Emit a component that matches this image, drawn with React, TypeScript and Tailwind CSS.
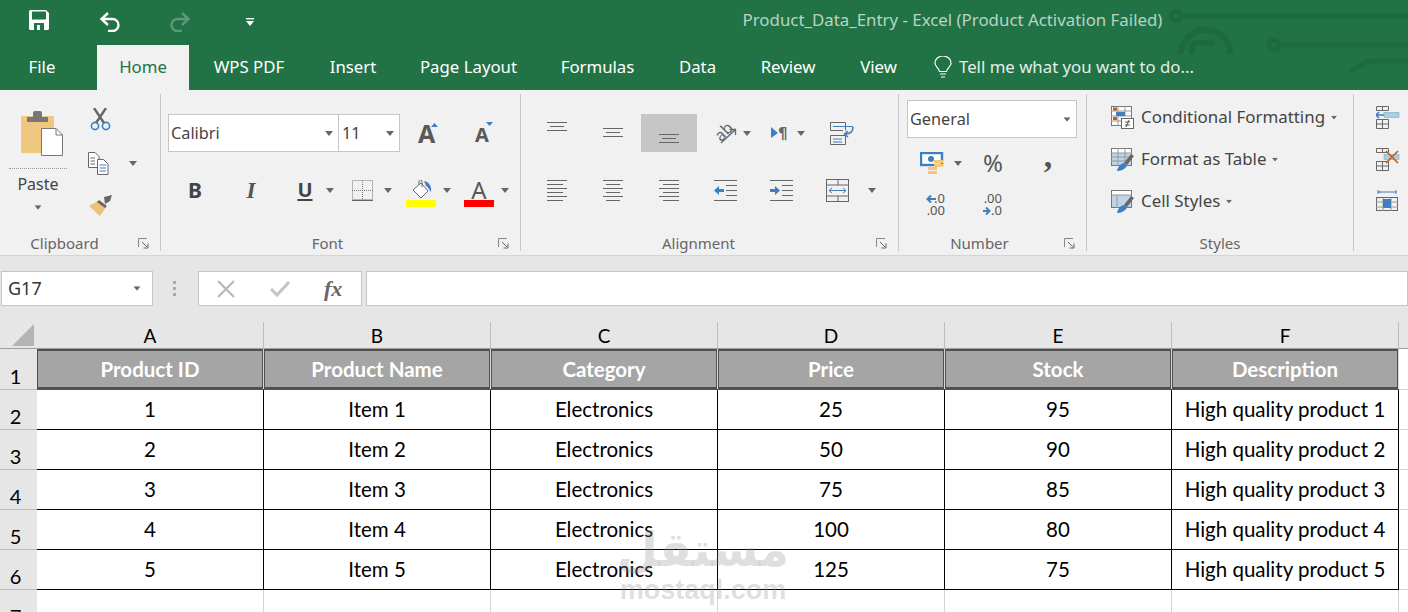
import React from "react";

const Caret = ({ className = "" }: { className?: string }) => (
  <svg width="8" height="5" viewBox="0 0 8 5" className={"shrink-0 " + className}>
    <polygon points="0,0 8,0 4,5" fill="#666" />
  </svg>
);

const Launcher = () => (
  <svg width="11" height="11" viewBox="0 0 11 11" className="absolute right-[11px] top-[4px]">
    <path d="M0.5 9V0.5H9" fill="none" stroke="#888" />
    <path d="M4 4L9 9M10 5.5V10H5.5" fill="none" stroke="#666" />
  </svg>
);

const Group = ({ w, label, labelCls, children, launcher = true }: { w: string; label: string; labelCls: string; children: React.ReactNode; launcher?: boolean }) => (
  <div className={"shrink-0 h-[157px] mt-[4px] border-r border-[#c6c6c6] flex flex-col " + w}>
    <div className="flex-1 min-h-0">{children}</div>
    <div className={"relative h-[17px] pt-[1px] text-center text-[15px] leading-[17px] text-[#666] " + labelCls}>
      {label}
      {launcher && <Launcher />}
    </div>
  </div>
);

const Lines = ({ rows }: { rows: [number, number, number][] }) => (
  <svg width="22" height="24" viewBox="0 0 22 24">
    {rows.map(([y, a, b], i) => (
      <rect key={i} x={a} y={y} width={b - a} height="1" fill="#666" />
    ))}
  </svg>
);

const AlignCell = ({ y }: { y: number }) => (
  <Lines rows={[[y, 1, 21], [y + 4, 4, 18], [y + 8, 1, 21]]} />
);

const Tab = ({ cls, children }: { cls: string; children: React.ReactNode }) => (
  <div className={"h-[45px] pb-[1px] flex items-center justify-center text-[16.8px] text-white shrink-0 " + cls}>{children}</div>
);

const Circuit = () => (
  <svg className="absolute left-[1160px] top-0" width="248" height="72" viewBox="0 0 248 72" fill="none" stroke="#1c6a3e" strokeWidth="5">
    <circle cx="16" cy="16" r="5" />
    <path d="M21 16H248" />
    <circle cx="114" cy="45" r="5" />
    <path d="M119 45H248" />
    <path d="M21 54A24 24 0 0 1 70 54" strokeWidth="6" />
    <path d="M32 43H55M32 43V54" strokeWidth="6" />
    <path d="M190 72L208 61H248" strokeWidth="5" />
  </svg>
);

const Save = () => (
  <svg width="20" height="20" viewBox="0 0 20 20">
    <path d="M0 1.5A1.5 1.5 0 0 1 1.5 0H17L20 3V18.5A1.5 1.5 0 0 1 18.5 20H1.5A1.5 1.5 0 0 1 0 18.5Z" fill="#fff" />
    <rect x="3" y="1.5" width="14" height="8" fill="#217346" />
    <rect x="5" y="13" width="10" height="7" fill="#217346" />
    <rect x="8" y="15" width="3" height="5" fill="#fff" />
  </svg>
);
const Undo = ({ color }: { color: string }) => (
  <svg width="22" height="20" viewBox="0 0 22 20" fill="none" stroke={color} strokeWidth="2.4">
    <path d="M9 1L2.5 7L9 13M2.5 7H13.5A6 6 0 0 1 13.5 19H9" />
  </svg>
);

const Clip = () => (
  <svg width="42" height="47" viewBox="0 0 42 47">
    <rect x="0" y="6" width="33" height="37" rx="1" fill="#efc77e" />
    <path d="M6 12V7H12V3A2 2 0 0 1 14 1H19A2 2 0 0 1 21 3V7H27V12Z" fill="#777" />
    <path d="M20.5 18.5H35L41.5 25V45.5H20.5Z" fill="#fff" stroke="#777" />
    <path d="M35 18.5V25H41.5" fill="none" stroke="#777" />
  </svg>
);
const Scissors = () => (
  <svg width="22" height="23" viewBox="0 0 22 23" fill="none">
    <path d="M4 0L14 15M16 0L6 15" stroke="#666" strokeWidth="2.4" />
    <circle cx="5" cy="18" r="3.6" stroke="#3f7fbf" strokeWidth="1.6" />
    <circle cx="16" cy="18" r="3.6" stroke="#3f7fbf" strokeWidth="1.6" />
  </svg>
);
const Copy = () => (
  <svg width="21" height="23" viewBox="0 0 21 23" fill="none">
    <path d="M.5.5H7L11 4.5V15.5H.5Z" fill="#fff" stroke="#666" />
    <path d="M9.5 7.5H15.5L20 12V22.5H9.5Z" fill="#fff" stroke="#666" />
    <path d="M2.5 6H7M2.5 9H7M2.5 12H7" stroke="#666" />
    <path d="M11.5 13H18M11.5 16H18M11.5 19H18" stroke="#3f7fbf" />
  </svg>
);
const Painter = () => (
  <svg width="24" height="22" viewBox="0 0 24 22">
    <path d="M15 2L23 0L21 6L16 9Z" fill="#666" />
    <path d="M9 6L17 12L11 21L0 11Z" fill="#e9c27b" />
    <path d="M10 5L18 11L16 13L8 7Z" fill="#666" />
  </svg>
);
const BigA = ({ size, tri, base }: { size: number; tri: string; base: number }) => (
  <svg width="26" height="24" viewBox="0 0 26 24" className="overflow-visible">
    <text x="0" y={base} fontSize={size} fontWeight="700" fill="#595959" fontFamily="Noto Sans">A</text>
    <polygon points={tri} fill="#3f7fbf" />
  </svg>
);
const Borders = () => (
  <svg width="21" height="21" viewBox="0 0 21 21" fill="none">
    <rect x=".5" y=".5" width="20" height="19" stroke="#777" strokeDasharray="1 1" />
    <path d="M10.5 0V20M0 10.5H21" stroke="#777" strokeDasharray="1 1" />
    <path d="M0 20.5H21" stroke="#666" />
  </svg>
);
const Fill = () => (
  <svg width="30" height="27" viewBox="0 0 30 27">
    <path d="M7 10L15 3L22 11L15 18Z" fill="#fff" stroke="#666" />
    <path d="M13 5V1.5A1.5 1.5 0 0 1 16 1.5V7" fill="none" stroke="#666" />
    <path d="M18 1C23 2 26 6 25 12C23 9 22 7 20 6Z" fill="#3f7fbf" />
    <rect x="0" y="20" width="30" height="7" fill="#ffff00" />
  </svg>
);
const FontColor = () => (
  <svg width="30" height="27" viewBox="0 0 30 27" className="overflow-visible">
    <text x="15" y="19" textAnchor="middle" fontSize="24" fill="#595959" fontFamily="Noto Sans">A</text>
    <rect x="0" y="20" width="30" height="7" fill="#ff0000" />
  </svg>
);
const Orient = () => (
  <svg width="22" height="20" viewBox="0 0 22 20" fill="none" className="shrink-0 overflow-visible">
    <text x="0" y="15" fontSize="16" fill="#666" fontFamily="Noto Sans" transform="rotate(-45 8 10)">ab</text>
    <path d="M6 20L20 7M14.5 6.5H20.5V12" stroke="#666" strokeWidth="1.3" />
  </svg>
);
const Para = () => (
  <svg width="20" height="16" viewBox="0 0 20 16" className="shrink-0 overflow-visible">
    <polygon points="0,2 7,8 0,13" fill="#3f7fbf" />
    <text x="7" y="14" fontSize="15" fontWeight="700" fill="#666" fontFamily="DejaVu Sans">¶</text>
  </svg>
);
const Wrap = () => (
  <svg width="24" height="23" viewBox="0 0 24 23" fill="none" className="shrink-0">
    <path d="M.5.5H15.5V8.5M.5 8.5H13M.5.5V8.5" stroke="#666" />
    <path d="M.5 13.5H15.5V22.5H.5Z" stroke="#666" />
    <path d="M3 4.5H23M3 17H12M3 20H12" stroke="#3f7fbf" />
    <path d="M23 5C23 10 20 12 15 12M18 9L14.5 12L18 15" stroke="#3f7fbf" strokeWidth="1.6" />
  </svg>
);
const Indent = ({ right }: { right: boolean }) => (
  <svg width="23" height="21" viewBox="0 0 23 21" className="shrink-0">
    {[0, 5, 10, 15, 20].map((y, i) => (
      <rect key={y} x={i === 0 || i === 4 ? 0 : 12} y={y} width={i === 0 || i === 4 ? 23 : 11} height="1" fill="#666" />
    ))}
    <path d={right ? "M0 9H5V6L10 10.5L5 15V12H0Z" : "M10 9H5V6L0 10.5L5 15V12H10Z"} fill="#3f7fbf" />
  </svg>
);
const Merge = () => (
  <svg width="24" height="23" viewBox="0 0 24 23" fill="none" className="shrink-0">
    <rect x=".5" y=".5" width="22" height="22" stroke="#666" />
    <path d="M0 6H23M0 17H23M12 0V6M12 17V23" stroke="#666" />
    <path d="M3 11.5H20M6 9L3 11.5L6 14M17 9L20 11.5L17 14" stroke="#3f7fbf" />
  </svg>
);
const Money = () => (
  <svg width="24" height="23" viewBox="0 0 24 23">
    <rect x="1" y="1" width="21" height="12" fill="#fff" stroke="#3f7fbf" strokeWidth="2.4" />
    <circle cx="11" cy="7" r="3" fill="#3f7fbf" />
    <rect x="14" y="8" width="9" height="3" fill="#efc77e" />
    <rect x="14" y="12" width="9" height="3" fill="#efc77e" />
    <rect x="8" y="15" width="9" height="3" fill="#efc77e" />
    <rect x="8" y="19" width="9" height="3" fill="#efc77e" />
  </svg>
);
const Dec = ({ inc }: { inc: boolean }) => (
  <svg width="26" height="26" viewBox="0 0 26 26" className="overflow-visible">
    {inc ? (
      <>
        <text x="25" y="11" textAnchor="end" fontSize="13" fill="#555" fontFamily="Noto Sans">.00</text>
        <text x="25" y="23" textAnchor="end" fontSize="13" fill="#555" fontFamily="Noto Sans">.0</text>
        <path d="M6 19H12M9 15.5L12.5 19L9 22.5" fill="none" stroke="#3f7fbf" strokeWidth="2" />
      </>
    ) : (
      <>
        <text x="24" y="11" textAnchor="end" fontSize="13" fill="#555" fontFamily="Noto Sans">.0</text>
        <text x="24" y="23" textAnchor="end" fontSize="13" fill="#555" fontFamily="Noto Sans">.00</text>
        <path d="M15 7H7M10 3.5L6.5 7L10 10.5" fill="none" stroke="#3f7fbf" strokeWidth="2" />
      </>
    )}
  </svg>
);
const CondFmt = () => (
  <svg width="23" height="23" viewBox="0 0 23 23" fill="none">
    <rect x=".5" y=".5" width="20" height="19" fill="#fff" stroke="#777" />
    <path d="M7 0V20M14 0V10M0 5H21M0 10H21M0 15H11" stroke="#999" />
    <rect x="5" y="6" width="9" height="4" fill="#3f7fbf" />
    <rect x="2" y="1.5" width="4" height="3" fill="#c55a11" />
    <rect x="2" y="11" width="4" height="3" fill="#c55a11" />
    <rect x="10.5" y="12.5" width="12" height="10" fill="#fff" stroke="#666" />
    <path d="M14 16H19M14 19H19M18 14L15 21" stroke="#444" strokeWidth=".9" />
  </svg>
);
const TableFmt = ({ cell }: { cell?: boolean }) => (
  <svg width="23" height="23" viewBox="0 0 23 23" fill="none">
    <rect x=".5" y=".5" width="20" height="17" fill="#fff" stroke="#777" />
    <rect x="1" y="5" width="19" height="12" fill="#bcd3e8" />
    {!cell && <path d="M7 0V18M14 0V18M0 5H21M0 9H21M0 13H21" stroke="#999" />}
    {cell && <path d="M0 5H21M6 5V18" stroke="#999" />}
    <path d="M13 15L20 6L23 8L16 17Z" fill="#666" />
    <path d="M6 23C7 18 10 15 14 15L16 18C14 21 10 23 6 23Z" fill="#3f7fbf" />
  </svg>
);
const CellOp = ({ kind }: { kind: 0 | 1 | 2 }) => (
  <svg width="24" height="23" viewBox="0 0 24 23" fill="none">
    {kind < 2 ? (
      <>
        <path d="M.5.5H12.5V4.5H.5ZM6.5.5V4.5M.5 13.5H12.5V22.5H.5ZM6.5 13.5V22.5M.5 18H12.5" stroke="#666" />
        <rect x="8" y="6.5" width="15" height="5" fill="#a9cde6" stroke="#7aa" strokeWidth=".5" />
        {kind === 0 ? (
          <path d="M0 9H8M3 6L0 9L3 12" stroke="#3f7fbf" strokeWidth="1.6" />
        ) : (
          <path d="M10 3L22 15M22 3L10 15" stroke="#c55a11" strokeWidth="1.6" />
        )}
      </>
    ) : (
      <>
        <path d="M2 2H20M2 0V4M20 0V4M5 2L3 2" stroke="#3f7fbf" />
        <rect x=".5" y="7.5" width="21" height="13" stroke="#666" />
        <path d="M7 8V21M15 8V21M0 12H22M0 17H22" stroke="#999" />
        <rect x="7" y="9" width="8" height="9" fill="#3f7fbf" />
      </>
    )}
  </svg>
);

const StyleRow = ({ icon, text }: { icon: React.ReactNode; text: string }) => (
  <div className="h-[42px] flex items-center">
    <span className="w-[30px] shrink-0">{icon}</span>
    <span className="text-[16.9px] text-[#444] whitespace-nowrap">{text}</span>
    <Caret className="ml-[5px] scale-75" />
  </div>
);

const cols = ["A", "B", "C", "D", "E", "F"];
const heads = ["Product ID", "Product Name", "Category", "Price", "Stock", "Description"];
const rows = [
  ["1", "Item 1", "Electronics", "25", "95", "High quality product 1"],
  ["2", "Item 2", "Electronics", "50", "90", "High quality product 2"],
  ["3", "Item 3", "Electronics", "75", "85", "High quality product 3"],
  ["4", "Item 4", "Electronics", "100", "80", "High quality product 4"],
  ["5", "Item 5", "Electronics", "125", "75", "High quality product 5"],
];

const RowHead = ({ n, tall }: { n: number; tall?: boolean }) => (
  <div className={"bg-[#e6e6e6] border-b border-[#bdbdbd] flex items-end justify-center pr-[6px] text-[20px] leading-[26px] text-black " + (tall ? "h-[41px]" : "h-[40px]")}>
    {n}
  </div>
);

export default function App() {
  return (
    <div className="relative w-[1408px] h-[612px] overflow-hidden bg-white font-['Noto_Sans',sans-serif]">
      {/* Green title & tabs */}
      <div className="relative h-[90px] bg-[#217346] overflow-hidden">
        <Circuit />
        <div className="relative h-[45px] flex items-center">
          <span className="ml-[29px] w-[20px] -mt-[5px]"><Save /></span>
          <span className="ml-[50px] w-[22px] -mt-[2px]"><Undo color="#fff" /></span>
          <span className="ml-[48px] w-[22px] -mt-[2px] -scale-x-100"><Undo color="#5c9a77" /></span>
          <span className="ml-[54px] w-[10px] -mt-[2px]">
            <svg width="10" height="10" viewBox="0 0 10 10"><rect x="1" y="1" width="8" height="1.4" fill="#fff" /><polygon points="1,4 9,4 5,9" fill="#fff" /></svg>
          </span>
          <span className="ml-[485px] w-[425px] text-[16.85px] text-center text-[#b9d3c3] whitespace-nowrap -mt-[5px]">Product_Data_Entry - Excel (Product Activation Failed)</span>
        </div>
        <div className="relative flex h-[45px]">
          <Tab cls="w-[84px]">File</Tab>
          <Tab cls="ml-[13px] w-[92px] bg-[#f1f1f1] !text-[#217346]">Home</Tab>
          <Tab cls="w-[120px]">WPS PDF</Tab>
          <Tab cls="w-[88px]">Insert</Tab>
          <Tab cls="w-[143px]">Page Layout</Tab>
          <Tab cls="w-[115px]">Formulas</Tab>
          <Tab cls="w-[85px]">Data</Tab>
          <Tab cls="w-[96px]">Review</Tab>
          <Tab cls="w-[85px]">View</Tab>
          <div className="ml-[13px] h-[45px] flex items-center">
            <svg width="18" height="23" viewBox="0 0 18 23" fill="none" stroke="#fff" strokeWidth="1.2">
              <path d="M5.5 15.5C5 12 1 11 1 7A8 7 0 0 1 17 7C17 11 13 12 12.5 15.5Z" />
              <path d="M6 18H12M7 21H11" />
            </svg>
          </div>
          <Tab cls="ml-[7px] !text-[#e3efe8]">Tell me what you want to do...</Tab>
        </div>
      </div>

      {/* Ribbon */}
      <div className="h-[166px] bg-[#f1f1f1] border-b border-[#d4d4d4] flex overflow-hidden text-[#444]">
        <Group w="w-[161px]" labelCls="pr-[31px]" label="Clipboard">
          <div className="flex">
            <div className="ml-[9px] w-[58px] flex flex-col items-center">
              <div className="mt-[16px] ml-[7px] h-[47px]"><Clip /></div>
              <div className="mt-[11px] w-full border-t border-dotted border-[#999]" />
              <div className="mt-[5px] text-[16px] leading-[20px]">Paste</div>
              <Caret className="mt-[11px] scale-90" />
            </div>
            <div className="ml-[21px] flex flex-col">
              <div className="mt-[14px] ml-[2px] h-[23px]"><Scissors /></div>
              <div className="mt-[21px] flex items-center h-[23px]">
                <Copy />
                <Caret className="ml-[20px]" />
              </div>
              <div className="mt-[20px] ml-[1px]"><Painter /></div>
            </div>
          </div>
        </Group>

        <Group w="w-[360px]" labelCls="pr-[26px]" label="Font">
          <div className="pt-[20px]">
            <div className="flex h-[38px] items-center ml-[7px]">
              <div className="w-[171px] h-[38px] bg-white border border-[#c6c6c6] flex items-center justify-between pl-[2px] pr-[5px] text-[16.3px]">
                Calibri <Caret />
              </div>
              <div className="w-[61px] h-[38px] bg-white border border-[#c6c6c6] border-l-0 flex items-center justify-between pl-[3px] pr-[5px] text-[16.3px]">
                11 <Caret />
              </div>
              <div className="ml-[18px] w-[26px]"><BigA size={25} base={22} tri="13,6 20,6 16.5,2" /></div>
              <div className="ml-[31px] w-[26px]"><BigA size={20} base={21} tri="11,1 18,1 14.5,5" /></div>
            </div>
            <div className="flex items-center h-[36px] mt-[20px]">
              <span className="ml-[24px] w-[20px] text-center text-[21px] font-bold text-[#444] leading-none">B</span>
              <span className="ml-[36px] w-[20px] text-center text-[23px] font-bold italic text-[#555] leading-none font-['Liberation_Serif',serif]">I</span>
              <span className="ml-[34px] w-[20px] text-center text-[20px] font-bold text-[#444] leading-none underline underline-offset-2">U</span>
              <Caret className="ml-[11px]" />
              <span className="ml-[18px]"><Borders /></span>
              <Caret className="ml-[11px]" />
              <span className="ml-[14px] mt-[6px]"><Fill /></span>
              <Caret className="ml-[7px]" />
              <span className="ml-[13px] mt-[6px]"><FontColor /></span>
              <Caret className="ml-[7px]" />
            </div>
          </div>
        </Group>

        <Group w="w-[378px]" labelCls="pr-[22px]" label="Alignment">
          <div className="ml-[8px] pt-[20px] grid grid-cols-[repeat(6,56px)] grid-rows-[38px_38px] gap-y-[19px]">
            <div className="flex justify-center pt-[8px] h-[38px]"><AlignCell y={0} /></div>
            <div className="flex justify-center pt-[14px] h-[38px]"><AlignCell y={0} /></div>
            <div className="flex justify-center pt-[20px] h-[38px] bg-[#c6c6c6]"><AlignCell y={0} /></div>
            <div className="flex items-center pl-[18px]"><Orient /><Caret className="ml-[6px]" /></div>
            <div className="flex items-center pl-[18px]"><Para /><Caret className="ml-[6px]" /></div>
            <div className="flex items-center pl-[21px]"><Wrap /></div>
            <div className="flex justify-center pt-[9px]"><Lines rows={[[0, 1, 21], [4, 1, 17], [8, 1, 21], [12, 1, 17], [16, 1, 21], [20, 1, 17]]} /></div>
            <div className="flex justify-center pt-[9px]"><Lines rows={[[0, 1, 21], [4, 4, 18], [8, 1, 21], [12, 4, 18], [16, 1, 21], [20, 4, 18]]} /></div>
            <div className="flex justify-center pt-[9px]"><Lines rows={[[0, 1, 21], [4, 5, 21], [8, 1, 21], [12, 5, 21], [16, 1, 21], [20, 5, 21]]} /></div>
            <div className="flex justify-center pt-[9px]"><Indent right={false} /></div>
            <div className="flex justify-center pt-[9px]"><Indent right /></div>
            <div className="flex items-start pl-[17px] pt-[8px]"><Merge /><Caret className="ml-[18px] mt-[9px]" /></div>
          </div>
        </Group>

        <Group w="w-[188px]" labelCls="pr-[26px]" label="Number">
          <div className="ml-[8px] pt-[6px]">
            <div className="w-[170px] h-[38px] bg-white border border-[#c6c6c6] flex items-center justify-between pl-[2px] pr-[5px] text-[16.3px]">
              General <Caret className="scale-90" />
            </div>
            <div className="flex items-center h-[38px] mt-[6px]">
              <span className="ml-[13px]"><Money /></span>
              <Caret className="ml-[10px]" />
              <span className="ml-[16px] w-[30px] text-center text-[24px] leading-none text-[#555]">%</span>
              <span className="ml-[25px] w-[30px] text-center text-[34px] font-bold leading-none text-[#555] font-['Liberation_Serif',serif] -mt-[14px]">,</span>
            </div>
            <div className="flex items-center h-[30px] mt-[8px]">
              <span className="ml-[14px]"><Dec inc={false} /></span>
              <span className="ml-[30px]"><Dec inc /></span>
            </div>
          </div>
        </Group>

        <Group w="w-[267px]" labelCls="" label="Styles" launcher={false}>
          <div className="ml-[24px] pt-[2px]">
            <StyleRow icon={<CondFmt />} text="Conditional Formatting" />
            <StyleRow icon={<TableFmt />} text="Format as Table" />
            <StyleRow icon={<TableFmt cell />} text="Cell Styles" />
          </div>
        </Group>

        <div className="ml-[22px] pt-[6px] flex flex-col">
          <div className="h-[42px] flex items-center"><CellOp kind={0} /></div>
          <div className="h-[42px] flex items-center"><CellOp kind={1} /></div>
          <div className="h-[42px] flex items-center"><CellOp kind={2} /></div>
        </div>
      </div>

      {/* Formula bar */}
      <div className="h-[66px] bg-[#e6e6e6] flex items-start pt-[15px]">
        <div className="ml-[1px] w-[152px] h-[35px] bg-white border border-[#c6c6c6] flex items-center justify-between pl-[6px] pr-[11px] text-[18px] text-[#333]">
          G17 <Caret className="scale-90" />
        </div>
        <div className="ml-[19px] w-[4px] h-[35px] flex flex-col items-center justify-center gap-[3px]">
          <i className="w-[3px] h-[3px] bg-[#aaa]" />
          <i className="w-[3px] h-[3px] bg-[#aaa]" />
          <i className="w-[3px] h-[3px] bg-[#aaa]" />
        </div>
        <div className="ml-[22px] w-[164px] h-[35px] bg-white border border-[#c6c6c6] flex items-center">
          <svg width="18" height="18" viewBox="0 0 18 18" className="ml-[18px]" stroke="#bbb" strokeWidth="2.4" fill="none"><path d="M1 1L17 17M17 1L1 17" /></svg>
          <svg width="20" height="16" viewBox="0 0 20 16" className="ml-[35px]" stroke="#c4c4c4" strokeWidth="3" fill="none"><path d="M1 8L7 14L19 1" /></svg>
          <span className="ml-[34px] text-[22px] italic font-bold text-[#666] leading-none font-['Liberation_Serif',serif]">fx</span>
        </div>
        <div className="ml-[4px] flex-1 h-[35px] bg-white border border-[#c6c6c6]" />
      </div>

      {/* Sheet */}
      <div className="grid grid-cols-[37px_repeat(6,227px)_1fr] font-['Lato',sans-serif]">
        <div className="h-[27px] bg-[#e6e6e6] border-b border-[#a0a0a0] flex items-end justify-end pr-[3px] pb-[2px]">
          <svg width="22" height="22" viewBox="0 0 22 22"><polygon points="22,0 22,22 0,22" fill="#b5b5b5" /></svg>
        </div>
        {cols.map((c) => (
          <div key={c} className="h-[27px] bg-[#e6e6e6] border-b border-r border-b-[#a0a0a0] border-r-[#bdbdbd] flex items-center justify-center text-[19px] text-black pt-[3px]">{c}</div>
        ))}
        <div className="h-[27px] bg-[#e6e6e6] border-b border-[#a0a0a0]" />

        <RowHead n={1} tall />
        {heads.map((h) => (
          <div key={h} className="h-[41px] bg-[#d8d8d8] pr-[1px] border-b border-black/60">
            <div className="h-full bg-[#a5a5a5] border border-[#505050] border-y-2 flex items-center justify-center text-[20.5px] font-bold text-white pt-[1px]">{h}</div>
          </div>
        ))}
        <div className="h-[41px] border-b border-[#d4d4d4]" />

        {rows.map((r, i) => (
          <React.Fragment key={i}>
            <RowHead n={i + 2} />
            {r.map((v, j) => (
              <div key={j} className="h-[40px] border-r border-b border-black flex items-center justify-center text-[20.5px] text-black whitespace-nowrap">{v}</div>
            ))}
            <div className="h-[40px] border-b border-[#d4d4d4]" />
          </React.Fragment>
        ))}

        <RowHead n={7} />
        {cols.map((c) => (
          <div key={c} className="h-[40px] border-r border-[#d4d4d4]" />
        ))}
        <div />
      </div>

      {/* Watermark */}
      <div className="absolute left-[623px] top-[522px] w-[160px] flex flex-col items-center pointer-events-none text-[#8f8f8f]/30 leading-none">
        <span className="text-[47px] font-bold leading-[56px] font-['DejaVu_Sans',sans-serif]">مستقل</span>
        <span className="text-[27px] font-bold leading-[24px] font-['Liberation_Sans',sans-serif] whitespace-nowrap">mostaql.com</span>
      </div>
    </div>
  );
}
